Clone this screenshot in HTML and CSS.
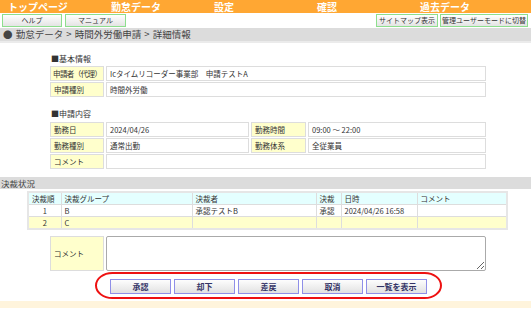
FILE: index.html
```html
<!DOCTYPE html>
<html lang="ja">
<head>
    <meta charset="UTF-8">
    <title>時間外労働申請 詳細情報</title>
    <link rel="stylesheet" href="styles.css">
</head>
<body>
    <div class="nav">
        <a class="nav-item">トップページ</a>
        <a class="nav-item">勤怠データ</a>
        <a class="nav-item">設定</a>
        <a class="nav-item">確認</a>
        <a class="nav-item">過去データ</a>
    </div>

    <div class="tools">
        <div class="tool-group">
            <button class="tool-btn w-help">ヘルプ</button>
            <button class="tool-btn w-manual">マニュアル</button>
        </div>
        <div class="tool-group">
            <button class="tool-btn w-sitemap">サイトマップ表示</button>
            <button class="tool-btn w-admin">管理ユーザーモードに切替</button>
        </div>
    </div>

    <div class="crumb">● 勤怠データ &gt; 時間外労働申請 &gt; 詳細情報</div>

    <div class="detail">
        <h2 class="section-title">■基本情報</h2>
        <div class="info-grid basic">
            <div class="label tight">申請者（代理）</div>
            <div class="value">Icタイムリコーダー事業部　申請テストA</div>
            <div class="label">申請種別</div>
            <div class="value">時間外労働</div>
        </div>

        <h2 class="section-title second">■申請内容</h2>
        <div class="info-grid request">
            <div class="label">勤務日</div>
            <div class="value">2024/04/26</div>
            <div class="label">勤務時間</div>
            <div class="value">09:00 ～ 22:00</div>
            <div class="label">勤務種別</div>
            <div class="value">通常出勤</div>
            <div class="label">勤務体系</div>
            <div class="value">全従業員</div>
            <div class="label">コメント</div>
            <div class="value span3"></div>
        </div>
    </div>

    <div class="bar">決裁状況</div>

    <table class="approvals">
        <colgroup>
            <col style="width:33px">
            <col style="width:131px">
            <col style="width:124px">
            <col style="width:25px">
            <col style="width:76px">
            <col>
        </colgroup>
        <tr class="head">
            <td>決裁順</td>
            <td>決裁グループ</td>
            <td>決裁者</td>
            <td>決裁</td>
            <td>日時</td>
            <td>コメント</td>
        </tr>
        <tr>
            <td class="num">1</td>
            <td>B</td>
            <td>承認テストB</td>
            <td>承認</td>
            <td>2024/04/26 16:58</td>
            <td></td>
        </tr>
        <tr class="pending">
            <td class="num">2</td>
            <td>C</td>
            <td></td>
            <td></td>
            <td></td>
            <td></td>
        </tr>
    </table>

    <div class="comment-row">
        <div class="label tall">コメント</div>
        <textarea class="comment-box"></textarea>
    </div>

    <div class="actions">
        <button class="act-btn">承認</button>
        <button class="act-btn">却下</button>
        <button class="act-btn">差戻</button>
        <button class="act-btn">取消</button>
        <button class="act-btn">一覧を表示</button>
        <div class="mark"></div>
    </div>

    <div class="footer"></div>
</body>
</html>
```

FILE: styles.css
```css
body {
    margin: 0;
    font-family: "Noto Sans CJK JP", "Liberation Sans", sans-serif;
    font-size: 7.5px;
    color: #333;
    background-color: #fff;
}

/* Top navigation */
.nav {
    display: flex;
    height: 13px;
    background-color: #ffa733;
}

.nav-item {
    width: 103px;
    padding-left: 8px;
    box-sizing: border-box;
    color: #fff;
    font-size: 10px;
    font-weight: bold;
    line-height: 13px;
}

.tools {
    display: flex;
    justify-content: space-between;
    padding: 1px 3px 1px 2px;
}

.tool-group {
    display: flex;
    gap: 2px;
}

.tool-group:first-child {
    gap: 3px;
}

.tool-btn {
    height: 13px;
    padding: 0;
    border: 1px solid #8ddf8d;
    background: linear-gradient(#ffffff, #e4e4e4);
    font-family: inherit;
    font-size: 7px;
    line-height: 11px;
    color: #333;
}

.w-help { width: 60px; }
.w-manual { width: 61px; }
.w-sitemap { width: 62px; }
.w-admin { width: 88px; }

.crumb {
    height: 13px;
    padding-left: 3px;
    background-color: #dcdcdc;
    border-bottom: 2px solid #ebebeb;
    font-size: 9.5px;
    line-height: 13px;
    color: #444;
    word-spacing: 1px;
}

/* Detail tables */
.detail {
    margin-left: 50px;
    width: 436px;
}

.section-title {
    margin: 11px 0 2px 1px;
    font-size: 8px;
    font-weight: normal;
    line-height: 10px;
    color: #333;
}

.section-title.second {
    margin-top: 12px;
    margin-bottom: 3px;
}

.info-grid {
    display: grid;
    column-gap: 2px;
    row-gap: 1px;
    grid-auto-rows: 15px;
}

.info-grid.basic {
    grid-template-columns: 54px 1fr;
}

.info-grid.request {
    grid-template-columns: 54px 143px 55px 1fr;
}

.label, .value {
    border: 1px solid #dddddd;
    padding-left: 3px;
    line-height: 13px;
    white-space: nowrap;
    overflow: hidden;
}

.label {
    background-color: #ffffcc;
}

.label.tight {
    padding-left: 2px;
    letter-spacing: -0.6px;
}

.value {
    background-color: #fff;
}

.span3 {
    grid-column: span 3;
}

/* Approval status */
.bar {
    margin-top: 8px;
    height: 12px;
    padding-left: 1px;
    background-color: #dcdcdc;
    font-size: 8.5px;
    line-height: 12px;
    color: #444;
}

.approvals {
    margin: 2px 0 0 27px;
    width: 481px;
    border-collapse: collapse;
    table-layout: fixed;
    border: 2px solid #e6e6e6;
}

.approvals td {
    height: 11px;
    padding: 0 3px;
    border: 1px solid #dddddd;
    line-height: 10px;
    white-space: nowrap;
}

.approvals .head td {
    background-color: #e4ffff;
}

.approvals .pending td {
    background-color: #ffffcc;
}

.approvals td.num {
    text-align: center;
}

.comment-row {
    display: flex;
    gap: 2px;
    margin: 6px 0 0 50px;
    width: 436px;
    height: 35px;
}

.label.tall {
    width: 54px;
    box-sizing: border-box;
    line-height: 33px;
}

.comment-box {
    flex-grow: 1;
    margin: 0;
    border: 1px solid #aaaaaa;
    border-radius: 2px;
    resize: both;
}

/* Action buttons */
.actions {
    position: relative;
    display: flex;
    gap: 3px;
    margin: 8px 0 0 110px;
    height: 15px;
}

.act-btn {
    width: 61px;
    height: 15px;
    padding: 0;
    border: 1px solid #8f8fe8;
    background: linear-gradient(#fdfdfd, #e2e2e2);
    font-family: inherit;
    font-size: 8px;
    font-weight: bold;
    color: #333366;
}

.mark {
    position: absolute;
    left: -15px;
    top: -7px;
    width: 347px;
    height: 27px;
    border: 2px solid #ee1111;
    border-radius: 18px / 14px;
    box-sizing: border-box;
    pointer-events: none;
}

.footer {
    margin-top: 7px;
    height: 7px;
    background-color: #fff4dc;
}
```
